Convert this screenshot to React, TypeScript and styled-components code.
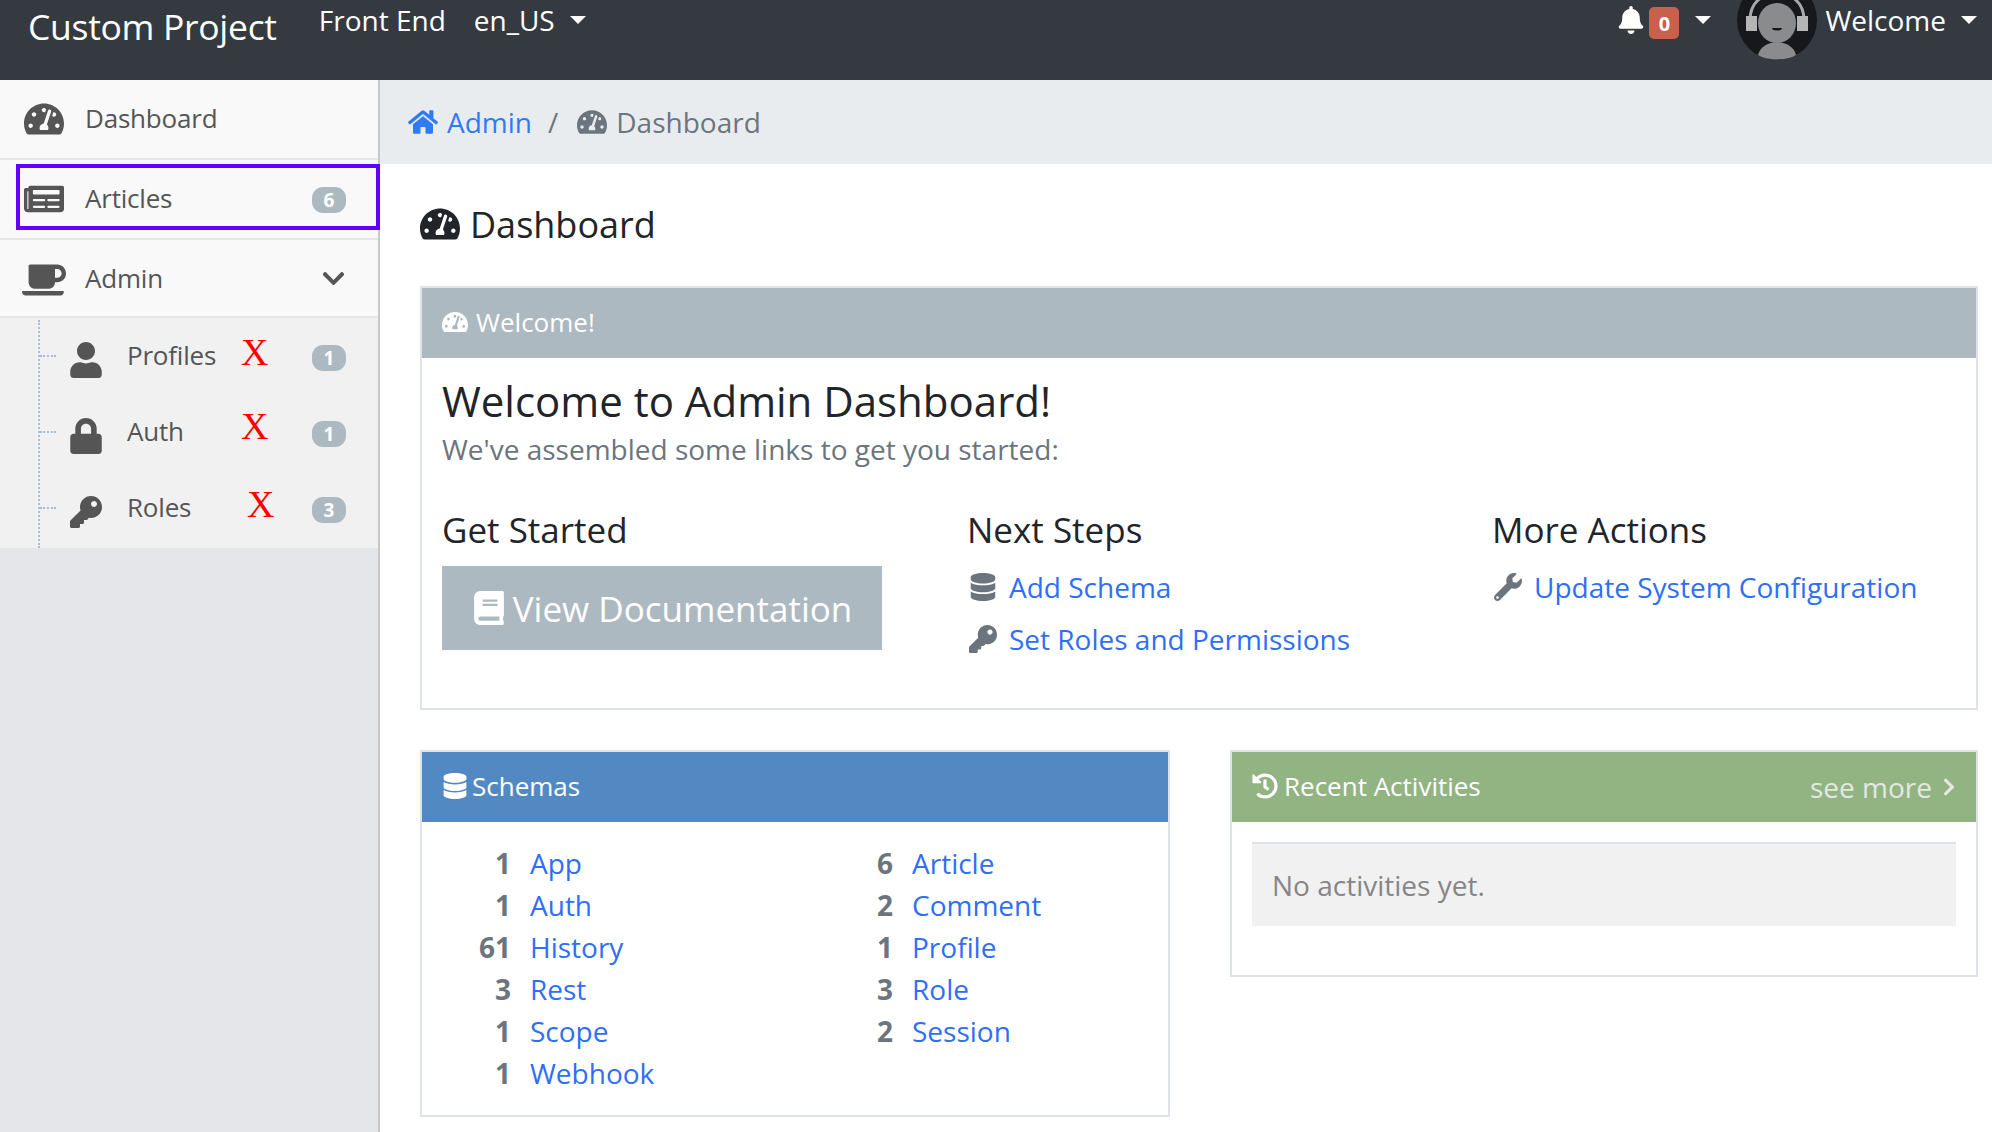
import React from "react";
import styled, { createGlobalStyle } from "styled-components";
import {
  FaBell,
  FaBook,
  FaChevronDown,
  FaChevronRight,
  FaCoffee,
  FaDatabase,
  FaHistory,
  FaHome,
  FaKey,
  FaLock,
  FaNewspaper,
  FaTachometerAlt,
  FaUser,
  FaWrench,
} from "react-icons/fa";

const GlobalStyle = createGlobalStyle`
  html, body {
    margin: 0;
    padding: 0;
    background: #fff;
    font-family: "Open Sans", "Noto Sans", sans-serif;
    color: #212529;
    overflow: hidden;
  }
  * { box-sizing: border-box; }
`;

const Page = styled.div`
  width: 1992px;
  height: 1132px;
  display: flex;
  flex-direction: column;
  overflow: hidden;
`;

const TopBar = styled.header`
  height: 80px;
  flex: none;
  background: #343a40;
  color: #fff;
  display: flex;
  align-items: flex-start;
  overflow: hidden;
  padding-left: 28px;
  padding-right: 15px;
`;
const Brand = styled.div`
  font-size: 35.5px;
  line-height: 53px;
  letter-spacing: -0.3px;
  margin-right: 42px;
`;
const TopLink = styled.div`
  font-size: 28px;
  line-height: 40px;
  margin-right: 28px;
  display: flex;
  align-items: center;
`;
const UserName = styled(TopLink)`
  margin-right: 0;
`;
const Caret = styled.span<{ $gap?: number }>`
  display: inline-block;
  width: 0;
  height: 0;
  border-left: 8px solid transparent;
  border-right: 8px solid transparent;
  border-top: 8px solid #fff;
  margin-left: ${(p) => p.$gap ?? 15}px;
`;
const TopRight = styled.div`
  margin-left: auto;
  display: flex;
  align-items: center;
  height: 40px;
`;
const BellIcon = styled(FaBell)`
  font-size: 28px;
  margin-right: 4px;
`;
const CountBadge = styled.span`
  width: 30px;
  height: 32px;
  margin-top: 6px;
  border-radius: 5px;
  background: #c9604c;
  font-size: 20px;
  font-weight: 700;
  display: flex;
  align-items: center;
  justify-content: center;
`;
const Avatar = styled.svg`
  width: 80px;
  height: 80px;
  margin: -20px 8px 0 26px;
  flex: none;
  align-self: flex-start;
`;

const Body = styled.div`
  flex: 1;
  display: flex;
  min-height: 0;
`;

const Sidebar = styled.aside`
  width: 380px;
  flex: none;
  background: #e4e6e9;
  border-right: 2px solid #c8c8c8;
`;
const NavRow = styled.div<{ $height?: number }>`
  position: relative;
  height: ${(p) => p.$height ?? 80}px;
  background: #f9f9f9;
  border-bottom: 2px solid #e7e7e7;
  display: flex;
  align-items: center;
  color: #555;
  font-size: 26px;
  padding-left: 24px;
  padding-right: 32px;
`;
const NavIcon = styled.span`
  width: 40px;
  margin-right: 21px;
  flex: none;
  display: flex;
  justify-content: center;
  font-size: 40px;
  color: #555;
`;
const CoffeeIcon = styled(FaCoffee)`
  font-size: 44px;
  margin: 4px -2px 0;
  flex: none;
`;
const NavLabel = styled.span<{ $lift?: number }>`
  flex: 1;
  letter-spacing: -0.2px;
  padding-bottom: ${(p) => p.$lift ?? 2}px;
`;
const NavBadge = styled.span`
  width: 34px;
  height: 26px;
  border-radius: 11px;
  background: #adb9c1;
  color: #fff;
  font-size: 19px;
  font-weight: 700;
  display: flex;
  align-items: center;
  justify-content: center;
  flex: none;
  margin-top: 2px;
`;
const Highlight = styled.div`
  position: absolute;
  left: 16px;
  right: -2px;
  top: 4px;
  height: 66px;
  border: 4px solid #6200ff;
  pointer-events: none;
`;
const SubList = styled.div`
  position: relative;
  background: #f1f1f1;
  height: 230px;
  padding-top: 1px;
  &::before {
    content: "";
    position: absolute;
    left: 38px;
    top: 2px;
    bottom: 0;
    border-left: 2px dotted #a3bddb;
  }
`;
const SubRow = styled.div`
  position: relative;
  height: 76px;
  display: flex;
  align-items: center;
  padding-left: 70px;
  padding-right: 32px;
  font-size: 26px;
  color: #555;
  &::before {
    content: "";
    position: absolute;
    left: 40px;
    top: 36px;
    width: 16px;
    border-top: 2px dotted #a3bddb;
  }
`;
const SubIcon = styled.span`
  width: 32px;
  margin-right: 25px;
  margin-top: 6px;
  display: flex;
  justify-content: center;
  font-size: 36px;
  color: #555;
  flex: none;
`;
const RedX = styled.span<{ $left: number; $top: number }>`
  position: absolute;
  left: ${(p) => p.$left}px;
  top: ${(p) => p.$top}px;
  color: #ff0000;
  font-family: "Liberation Serif", serif;
  font-size: 38px;
  line-height: 38px;
`;

const Main = styled.main`
  flex: 1;
  min-width: 0;
`;
const Breadcrumb = styled.nav`
  height: 84px;
  background: #e9ecef;
  display: flex;
  align-items: center;
  padding-left: 28px;
  font-size: 28px;
  color: #6c757d;
`;
const CrumbIcon = styled.span`
  display: flex;
  font-size: 30px;
  margin-right: 9px;
`;
const CrumbLink = styled.a`
  color: #2f7bf6;
  display: flex;
  align-items: center;
`;
const CrumbSep = styled.span`
  margin: 0 19px 0 16px;
`;
const Crumb = styled.span`
  display: flex;
  align-items: center;
`;

const Content = styled.div`
  padding: 0 14px 0 40px;
`;
const PageTitle = styled.h1`
  margin: 0;
  height: 122px;
  padding-bottom: 2px;
  display: flex;
  align-items: center;
  font-size: 36px;
  font-weight: 400;
  color: #212529;
`;
const TitleIcon = styled.span`
  display: flex;
  font-size: 40px;
  margin-right: 10px;
`;

const Card = styled.section`
  border: 2px solid #dfe3e7;
  background: #fff;
`;
const CardHeader = styled.div<{ $bg: string }>`
  height: 70px;
  background: ${(p) => p.$bg};
  color: #fff;
  font-size: 26px;
  display: flex;
  align-items: center;
  padding: 0 20px 2px;
`;
const HeaderIcon = styled.span<{ $gap: number }>`
  display: flex;
  font-size: 26px;
  margin-right: ${(p) => p.$gap}px;
`;
const SeeMore = styled.span`
  margin-left: auto;
  color: #e4e8e2;
  font-size: 28px;
  display: flex;
  align-items: center;
  margin-top: 2px;
`;
const SeeMoreIcon = styled(FaChevronRight)`
  font-size: 20px;
  margin: 0 -3px 0 7px;
`;
const WelcomeBody = styled.div`
  padding: 13px 20px 0;
  height: 350px;
`;
const WelcomeTitle = styled.h2`
  margin: 0;
  font-size: 42px;
  line-height: 60px;
  font-weight: 400;
`;
const Lead = styled.p`
  margin: 0;
  font-size: 28px;
  line-height: 36px;
  color: #6c757d;
`;
const ActionGrid = styled.div`
  display: grid;
  grid-template-columns: repeat(3, 525px);
  margin-top: 40px;
`;
const ActionTitle = styled.h3`
  margin: 0 0 8px;
  font-size: 35px;
  line-height: 46px;
  font-weight: 400;
`;
const DocButton = styled.a`
  width: 440px;
  height: 84px;
  margin-top: 13px;
  background: #adb9c1;
  color: #fff;
  font-size: 35px;
  display: flex;
  align-items: center;
  justify-content: center;
`;
const DocIcon = styled(FaBook)`
  font-size: 34px;
  margin-right: 7px;
`;
const ActionLink = styled.div`
  height: 52px;
  display: flex;
  align-items: center;
  font-size: 28px;
  color: #2f6ff6;
`;
const ActionIcon = styled.span`
  width: 32px;
  margin-right: 10px;
  display: flex;
  justify-content: center;
  font-size: 28px;
  color: #6c757d;
`;

const Columns = styled.div`
  display: grid;
  grid-template-columns: 750px 748px;
  gap: 60px;
  align-items: start;
  margin-top: 40px;
`;
const SchemaBody = styled.div`
  padding: 20px 20px 21px;
  display: grid;
  grid-template-columns: 382px 1fr;
`;
const SchemaRow = styled.div`
  height: 42px;
  display: grid;
  grid-template-columns: 69px 1fr;
  column-gap: 19px;
  align-items: center;
  font-size: 28px;
`;
const SchemaCount = styled.span`
  text-align: right;
  font-weight: 700;
  color: #6c757d;
  font-size: 28px;
`;
const SchemaName = styled.a`
  color: #2f6ff6;
`;
const ActivityBody = styled.div`
  padding: 20px 20px 49px;
`;
const EmptyWell = styled.div`
  height: 84px;
  background: #f1f1f1;
  border-top: 2px solid #dfe3e7;
  display: flex;
  align-items: center;
  padding-left: 20px;
  font-size: 28px;
  color: #868686;
`;

// headset avatar, clipped by the top bar
const HeadsetAvatar = () => (
  <Avatar viewBox="0 0 80 80">
    <circle cx="40" cy="40" r="40" fill="#16181b" />
    <path d="M13 40 C13 4 67 4 67 40" fill="none" stroke="#a9a9a9" strokeWidth="3" />
    <ellipse cx="40" cy="43" rx="19" ry="20" fill="#8a8b8d" />
    <rect x="9" y="36" width="11" height="15" fill="#b5b5b5" />
    <rect x="60" y="36" width="11" height="15" fill="#b5b5b5" />
    <path d="M35 48 h10 a5 2.5 0 0 1 -10 0z" fill="#16181b" />
    <path d="M21 75 C25 58 55 58 59 75 C50 81 30 81 21 75z" fill="#8a8b8d" />
  </Avatar>
);

const leftSchemas = [
  ["1", "App"],
  ["1", "Auth"],
  ["61", "History"],
  ["3", "Rest"],
  ["1", "Scope"],
  ["1", "Webhook"],
];
const rightSchemas = [
  ["6", "Article"],
  ["2", "Comment"],
  ["1", "Profile"],
  ["3", "Role"],
  ["2", "Session"],
];

const subItems = [
  { label: "Profiles", icon: <FaUser />, count: 1, x: [241, 14] },
  { label: "Auth", icon: <FaLock />, count: 1, x: [241, 12] },
  { label: "Roles", icon: <FaKey />, count: 3, x: [247, 14] },
];

export default function App() {
  return (
    <Page>
      <GlobalStyle />
      <TopBar>
        <Brand>Custom Project</Brand>
        <TopLink>Front End</TopLink>
        <TopLink>
          en_US
          <Caret />
        </TopLink>
        <TopRight>
          <BellIcon />
          <CountBadge>0</CountBadge>
          <Caret $gap={16} />
          <HeadsetAvatar />
          <UserName>
            Welcome
            <Caret />
          </UserName>
        </TopRight>
      </TopBar>
      <Body>
        <Sidebar>
          <NavRow>
            <NavIcon>
              <FaTachometerAlt />
            </NavIcon>
            <NavLabel>Dashboard</NavLabel>
          </NavRow>
          <NavRow>
            <NavIcon>
              <FaNewspaper />
            </NavIcon>
            <NavLabel>Articles</NavLabel>
            <NavBadge>6</NavBadge>
            <Highlight />
          </NavRow>
          <NavRow $height={78}>
            <NavIcon>
              <CoffeeIcon />
            </NavIcon>
            <NavLabel $lift={0}>Admin</NavLabel>
            <FaChevronDown size={25} />
          </NavRow>
          <SubList>
            {subItems.map((item) => (
              <SubRow key={item.label}>
                <SubIcon>{item.icon}</SubIcon>
                <NavLabel $lift={4}>{item.label}</NavLabel>
                <RedX $left={item.x[0]} $top={item.x[1]}>
                  X
                </RedX>
                <NavBadge>{item.count}</NavBadge>
              </SubRow>
            ))}
          </SubList>
        </Sidebar>
        <Main>
          <Breadcrumb>
            <CrumbLink>
              <CrumbIcon>
                <FaHome />
              </CrumbIcon>
              Admin
            </CrumbLink>
            <CrumbSep>/</CrumbSep>
            <Crumb>
              <CrumbIcon>
                <FaTachometerAlt />
              </CrumbIcon>
              Dashboard
            </Crumb>
          </Breadcrumb>
          <Content>
            <PageTitle>
              <TitleIcon>
                <FaTachometerAlt />
              </TitleIcon>
              Dashboard
            </PageTitle>
            <Card>
              <CardHeader $bg="#adb9c1">
                <HeaderIcon $gap={8}>
                  <FaTachometerAlt />
                </HeaderIcon>
                Welcome!
              </CardHeader>
              <WelcomeBody>
                <WelcomeTitle>Welcome to Admin Dashboard!</WelcomeTitle>
                <Lead>We've assembled some links to get you started:</Lead>
                <ActionGrid>
                  <div>
                    <ActionTitle>Get Started</ActionTitle>
                    <DocButton>
                      <DocIcon />
                      View Documentation
                    </DocButton>
                  </div>
                  <div>
                    <ActionTitle>Next Steps</ActionTitle>
                    <ActionLink>
                      <ActionIcon>
                        <FaDatabase />
                      </ActionIcon>
                      Add Schema
                    </ActionLink>
                    <ActionLink>
                      <ActionIcon>
                        <FaKey />
                      </ActionIcon>
                      Set Roles and Permissions
                    </ActionLink>
                  </div>
                  <div>
                    <ActionTitle>More Actions</ActionTitle>
                    <ActionLink>
                      <ActionIcon>
                        <FaWrench />
                      </ActionIcon>
                      Update System Configuration
                    </ActionLink>
                  </div>
                </ActionGrid>
              </WelcomeBody>
            </Card>
            <Columns>
              <Card>
                <CardHeader $bg="#5289c3">
                  <HeaderIcon $gap={4}>
                    <FaDatabase />
                  </HeaderIcon>
                  Schemas
                </CardHeader>
                <SchemaBody>
                  <div>
                    {leftSchemas.map(([count, name]) => (
                      <SchemaRow key={name}>
                        <SchemaCount>{count}</SchemaCount>
                        <SchemaName>{name}</SchemaName>
                      </SchemaRow>
                    ))}
                  </div>
                  <div>
                    {rightSchemas.map(([count, name]) => (
                      <SchemaRow key={name}>
                        <SchemaCount>{count}</SchemaCount>
                        <SchemaName>{name}</SchemaName>
                      </SchemaRow>
                    ))}
                  </div>
                </SchemaBody>
              </Card>
              <Card>
                <CardHeader $bg="#92b483">
                  <HeaderIcon $gap={6}>
                    <FaHistory />
                  </HeaderIcon>
                  Recent Activities
                  <SeeMore>
                    see more
                    <SeeMoreIcon />
                  </SeeMore>
                </CardHeader>
                <ActivityBody>
                  <EmptyWell>No activities yet.</EmptyWell>
                </ActivityBody>
              </Card>
            </Columns>
          </Content>
        </Main>
      </Body>
    </Page>
  );
}
